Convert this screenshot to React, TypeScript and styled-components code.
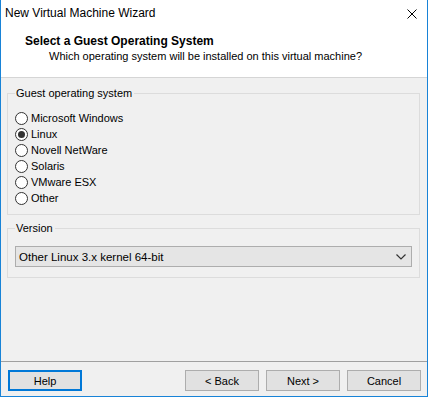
import styled, { createGlobalStyle } from "styled-components";

const GlobalStyle = createGlobalStyle`
  html, body {
    margin: 0;
    padding: 0;
    background: #f0f0f0;
  }
  * {
    box-sizing: border-box;
  }
`;

const Window = styled.div`
  width: 428px;
  height: 397px;
  display: flex;
  flex-direction: column;
  background: #f0f0f0;
  border: 1px solid #1883d7;
  border-top: none;
  font-family: "Liberation Sans", Arial, sans-serif;
  font-size: 11px;
  color: #000;
`;

const TitleBar = styled.div`
  height: 30px;
  display: flex;
  align-items: flex-start;
  justify-content: space-between;
  background: #fff;
  padding: 5px 10px 0 4px;
  font-size: 12px;
  line-height: 16px;
`;

const CloseIcon = styled.svg`
  margin-top: 4px;
`;

const Header = styled.div`
  height: 48px;
  background: #fff;
  border-bottom: 1px solid #d5d5d5;
  padding: 3px 0 0 24px;
  line-height: 16px;
`;

const HeaderTitle = styled.div`
  font-weight: bold;
  font-size: 12px;
`;

const HeaderSubtitle = styled.div`
  padding-left: 24px;
  margin-top: -1px;
`;

const Content = styled.div`
  flex: 1;
  padding: 7px 7px 0 6px;
  display: flex;
  flex-direction: column;
  gap: 5px;
`;

const GroupBox = styled.fieldset<{ $padTop: number; $padBottom: number }>`
  margin: 0;
  border: 1px solid #dcdcdc;
  padding: ${(p) => p.$padTop}px 7px ${(p) => p.$padBottom}px 7px;
  min-width: 0;
`;

const Legend = styled.legend`
  padding: 0 2px 0 1px;
  line-height: 16px;
`;

const RadioRow = styled.label`
  display: flex;
  align-items: center;
  gap: 3px;
  height: 16px;
  line-height: 16px;
  margin-top: 1px;
  margin-bottom: -1px;
`;

const RadioCircle = styled.span<{ $checked: boolean }>`
  width: 13px;
  height: 13px;
  border-radius: 50%;
  border: 1px solid #333;
  background: #fff;
  display: flex;
  align-items: center;
  justify-content: center;

  &::after {
    content: "";
    width: 7px;
    height: 7px;
    border-radius: 50%;
    background: ${(p) => (p.$checked ? "#333" : "transparent")};
  }
`;

const Combo = styled.div`
  height: 21px;
  display: flex;
  align-items: center;
  justify-content: space-between;
  background: #e5e5e5;
  border: 1px solid #adadad;
  padding: 0 5px 0 3px;
  font-size: 11.5px;
`;

const Footer = styled.div`
  border-top: 1px solid #a0a0a0;
  padding: 8px 6px 5px 7px;
  display: flex;
  gap: 7px;
`;

const Spacer = styled.div`
  flex: 1;
`;

const Button = styled.button<{ $focused?: boolean }>`
  width: 74px;
  height: 21px;
  padding: 0;
  font: inherit;
  color: #000;
  background: #e1e1e1;
  border: ${(p) => (p.$focused ? "2px solid #0078d7" : "1px solid #adadad")};
`;

const systems = [
  "Microsoft Windows",
  "Linux",
  "Novell NetWare",
  "Solaris",
  "VMware ESX",
  "Other",
];

export default function App() {
  return (
    <>
      <GlobalStyle />
      <Window>
        <TitleBar>
          <span>New Virtual Machine Wizard</span>
          <CloseIcon width="10" height="10" viewBox="0 0 10 10">
            <path d="M0.5 0.5 L9.5 9.5 M9.5 0.5 L0.5 9.5" stroke="#000" strokeWidth="1" />
          </CloseIcon>
        </TitleBar>
        <Header>
          <HeaderTitle>Select a Guest Operating System</HeaderTitle>
          <HeaderSubtitle>
            Which operating system will be installed on this virtual machine?
          </HeaderSubtitle>
        </Header>
        <Content>
          <GroupBox $padTop={8} $padBottom={9}>
            <Legend>Guest operating system</Legend>
            {systems.map((s) => (
              <RadioRow key={s}>
                <RadioCircle $checked={s === "Linux"} />
                {s}
              </RadioRow>
            ))}
          </GroupBox>
          <GroupBox $padTop={10} $padBottom={10}>
            <Legend>Version</Legend>
            <Combo>
              <span>Other Linux 3.x kernel 64-bit</span>
              <svg width="10" height="6" viewBox="0 0 10 6">
                <path d="M0.5 0.5 L5 5 L9.5 0.5" fill="none" stroke="#333" strokeWidth="1.2" />
              </svg>
            </Combo>
          </GroupBox>
        </Content>
        <Footer>
          <Button $focused>Help</Button>
          <Spacer />
          <Button>&lt; Back</Button>
          <Button>Next &gt;</Button>
          <Button>Cancel</Button>
        </Footer>
      </Window>
    </>
  );
}
